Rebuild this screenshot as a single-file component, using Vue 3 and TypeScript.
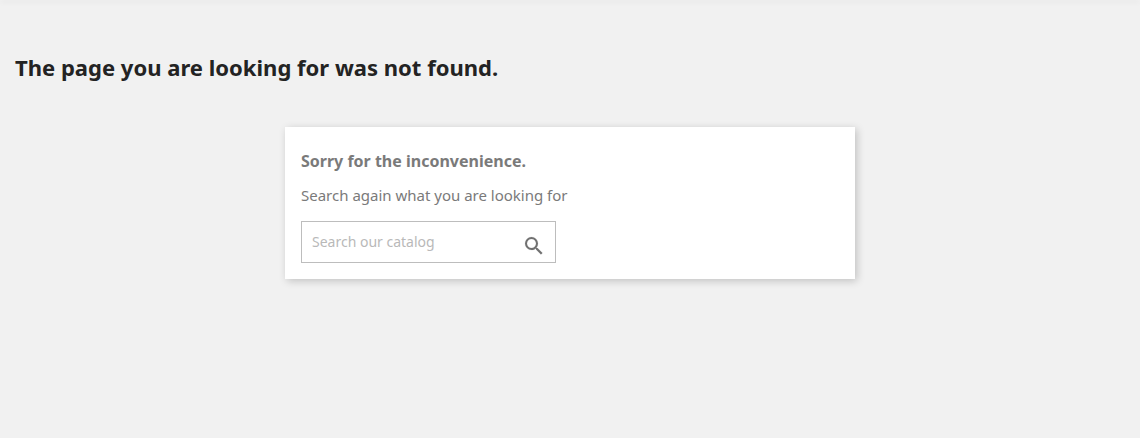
<script setup lang="ts">
const title = 'The page you are looking for was not found.'
</script>

<template>
  <div class="page">
    <header class="topbar"></header>
    <main class="content">
      <h1 class="title">{{ title }}</h1>
      <section class="card">
        <h4 class="sorry">Sorry for the inconvenience.</h4>
        <p class="hint">Search again what you are looking for</p>
        <form class="search" @submit.prevent>
          <input class="field" type="text" placeholder="Search our catalog" />
          <svg class="icon" width="24" height="24" viewBox="0 0 24 24" aria-hidden="true">
            <path fill="#707070" stroke="#707070" stroke-width="0.12" d="M15.5 14h-.79l-.28-.27A6.47 6.47 0 0 0 16 9.5 6.5 6.5 0 1 0 9.5 16c1.61 0 3.09-.59 4.23-1.57l.27.28v.79l5 4.99L20.49 19l-4.99-5zm-6 0C7.01 14 5 11.99 5 9.5S7.01 5 9.5 5 14 7.01 14 9.5 11.99 14 9.5 14z"/>
          </svg>
        </form>
      </section>
    </main>
  </div>
</template>

<style>
html, body { margin: 0; background: #f1f1f1; }
</style>

<style scoped>
.page {
  height: 438px;
  box-sizing: border-box;
  background: #f1f1f1;
  font-family: "Noto Sans", sans-serif;
  overflow: hidden;
}
.topbar {
  height: 1px;
  margin-top: -1px;
  box-shadow: 0 2px 5px 0 rgba(0, 0, 0, 0.11);
}
.content {
  padding: 53px 15px 0;
}
.title {
  margin: 0;
  font-size: 22.04px;
  line-height: 28px;
  font-weight: 700;
  color: #232323;
}
.card {
  width: 570px;
  box-sizing: border-box;
  margin: 46px auto 0;
  padding: 22px 16px 16px;
  background: #fff;
  box-shadow: 2px 2px 8px 0 rgba(0, 0, 0, 0.2);
}
.sorry {
  margin: 0;
  font-size: 16px;
  line-height: 24px;
  font-weight: 700;
  color: #7a7a7a;
}
.hint {
  margin: 11px 0 0;
  font-size: 15px;
  line-height: 22px;
  color: #7a7a7a;
}
.search {
  position: relative;
  width: 255px;
  margin-top: 15px;
}
.field {
  display: block;
  width: 100%;
  height: 42px;
  box-sizing: border-box;
  padding: 0 40px 2px 10px;
  border: 1px solid #bdbdbd;
  background: #fff;
  font-family: inherit;
  font-size: 14px;
  color: #7a7a7a;
  outline: none;
}
.field::placeholder {
  color: #b9b9b9;
  opacity: 1;
}
.icon {
  position: absolute;
  right: 10px;
  top: 13px;
}
</style>
